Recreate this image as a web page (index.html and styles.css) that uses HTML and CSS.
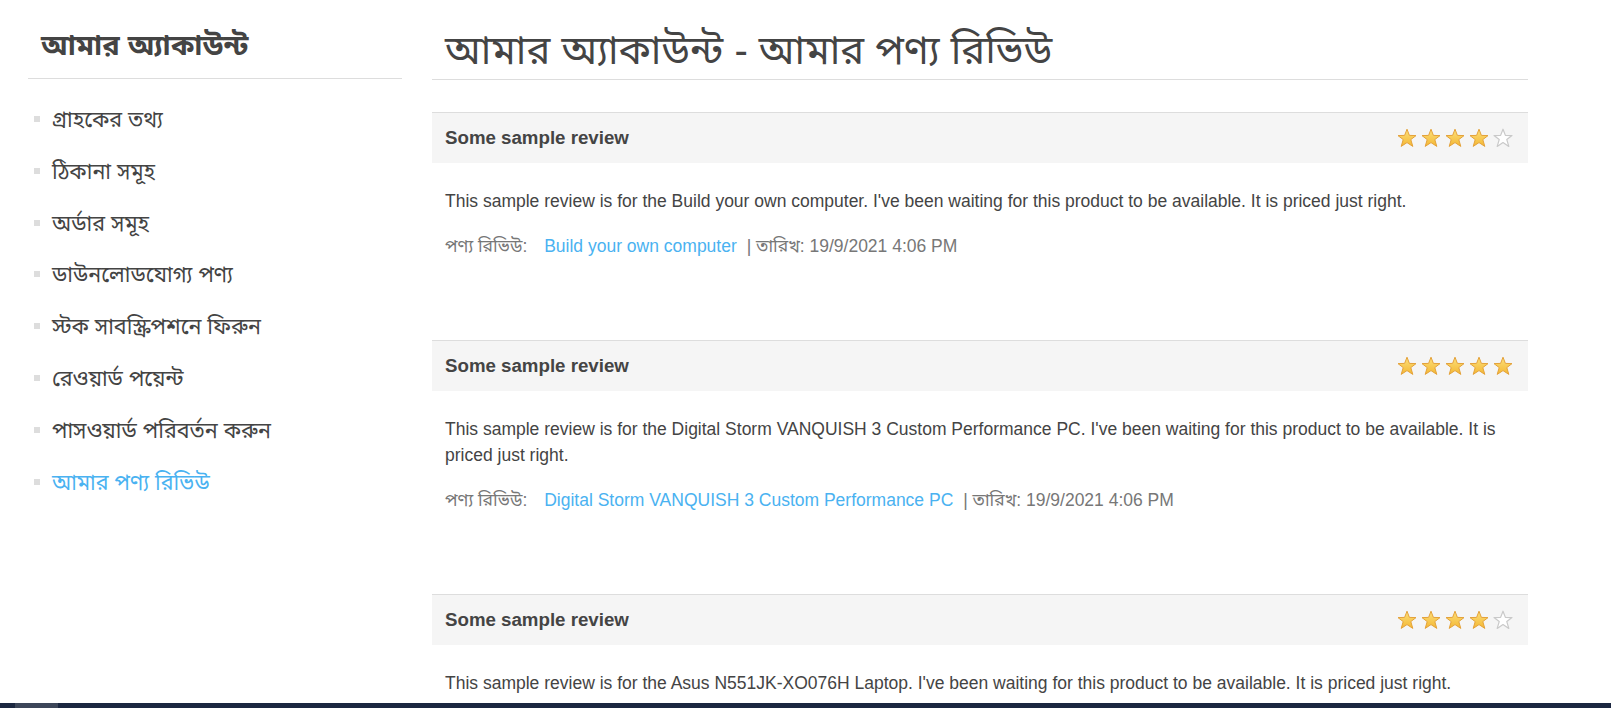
FILE: index.html
```html
<!DOCTYPE html>
<html lang="bn">
<head>
<meta charset="utf-8">
<title>আমার অ্যাকাউন্ট - আমার পণ্য রিভিউ</title>
<link rel="stylesheet" href="styles.css">
</head>
<body>
<svg class="defs" width="0" height="0" aria-hidden="true">
  <defs>
    <linearGradient id="gold" x1="0" y1="0" x2="0" y2="1">
      <stop offset="0" stop-color="#fde07a"/>
      <stop offset="1" stop-color="#f3b733"/>
    </linearGradient>
    <symbol id="star" viewBox="0 0 100 100">
      <polygon points="50,6 62,37 95,38 69,58 79,92 50,73 21,92 31,58 5,38 38,37"/>
    </symbol>
  </defs>
</svg>
<div class="page">
  <aside class="side">
    <div class="side-title">আমার অ্যাকাউন্ট</div>
    <ul class="side-list">
      <li><a href="#">গ্রাহকের তথ্য</a></li>
      <li><a href="#">ঠিকানা সমূহ</a></li>
      <li><a href="#">অর্ডার সমূহ</a></li>
      <li><a href="#">ডাউনলোডযোগ্য পণ্য</a></li>
      <li><a href="#">স্টক সাবস্ক্রিপশনে ফিরুন</a></li>
      <li><a href="#">রেওয়ার্ড পয়েন্ট</a></li>
      <li><a href="#">পাসওয়ার্ড পরিবর্তন করুন</a></li>
      <li class="active"><a href="#">আমার পণ্য রিভিউ</a></li>
    </ul>
  </aside>
  <main class="main">
    <h1 class="page-title">আমার অ্যাকাউন্ট - আমার পণ্য রিভিউ</h1>

    <div class="review">
      <div class="review-head">
        <strong class="review-title">Some sample review</strong>
        <div class="stars">
          <svg class="star on"><use href="#star"/></svg><svg class="star on"><use href="#star"/></svg><svg class="star on"><use href="#star"/></svg><svg class="star on"><use href="#star"/></svg><svg class="star off"><use href="#star"/></svg>
        </div>
      </div>
      <p class="review-text">This sample review is for the Build your own computer. I've been waiting for this product to be available. It is priced just right.</p>
      <div class="review-info"><span class="lbl">পণ্য রিভিউ:</span> <a href="#">Build your own computer</a> <span class="sep">|</span> <span class="lbl">তারিখ:</span> 19/9/2021 4:06 PM</div>
    </div>

    <div class="review">
      <div class="review-head">
        <strong class="review-title">Some sample review</strong>
        <div class="stars">
          <svg class="star on"><use href="#star"/></svg><svg class="star on"><use href="#star"/></svg><svg class="star on"><use href="#star"/></svg><svg class="star on"><use href="#star"/></svg><svg class="star on"><use href="#star"/></svg>
        </div>
      </div>
      <p class="review-text">This sample review is for the Digital Storm VANQUISH 3 Custom Performance PC. I've been waiting for this product to be available. It is priced just right.</p>
      <div class="review-info"><span class="lbl">পণ্য রিভিউ:</span> <a href="#">Digital Storm VANQUISH 3 Custom Performance PC</a> <span class="sep">|</span> <span class="lbl">তারিখ:</span> 19/9/2021 4:06 PM</div>
    </div>

    <div class="review">
      <div class="review-head">
        <strong class="review-title">Some sample review</strong>
        <div class="stars">
          <svg class="star on"><use href="#star"/></svg><svg class="star on"><use href="#star"/></svg><svg class="star on"><use href="#star"/></svg><svg class="star on"><use href="#star"/></svg><svg class="star off"><use href="#star"/></svg>
        </div>
      </div>
      <p class="review-text">This sample review is for the Asus N551JK-XO076H Laptop. I've been waiting for this product to be available. It is priced just right.</p>
      <div class="review-info"><span class="lbl">পণ্য রিভিউ:</span> <a href="#">Asus N551JK-XO076H Laptop</a> <span class="sep">|</span> <span class="lbl">তারিখ:</span> 19/9/2021 4:06 PM</div>
    </div>
  </main>
</div>
<div class="bottom-bar"><span class="bar-thumb"></span></div>
</body>
</html>
```

FILE: styles.css
```css
* { box-sizing: border-box; }
html, body { margin: 0; padding: 0; background: #fff; }
body {
  font-family: "Liberation Sans", "Noto Sans Bengali", "Lohit Bengali", "FreeSans", sans-serif;
  color: #444;
  font-size: 17.5px;
}
.defs { position: absolute; width: 0; height: 0; overflow: hidden; }
a { text-decoration: none; }

.page {
  display: flex;
  align-items: flex-start;
  padding-left: 28px;
}

.side { width: 374px; flex: none; }
.side-title {
  margin-top: 30px;
  padding: 0 13px 17px;
  font-size: 29px;
  line-height: 31px;
  font-weight: bold;
  color: #444;
  border-bottom: 1px solid #ddd;
}
.side-list {
  list-style: none;
  margin: 16px 0 0;
  padding: 0 0 0 24px;
}
.side-list li {
  padding: 12px 0;
  font-size: 21.5px;
  line-height: 27.6px;
  height: 51.8px;
}
.side-list a {
  position: relative;
  display: block;
  color: #444;
}
.side-list a::before {
  content: "";
  position: absolute;
  left: -18px;
  top: 9px;
  width: 6px;
  height: 6px;
  background: #ddd;
}
.side-list li.active a { color: #4ab2f1; }

.main {
  width: 1096px;
  margin-left: 30px;
  flex: none;
}
.page-title {
  margin: 28px 0 0;
  padding: 0 13px 7px;
  font-size: 40px;
  line-height: 44px;
  font-weight: normal;
  color: #444;
  border-bottom: 1px solid #ddd;
}
.page-title + .review { margin-top: 32px; }

.review { margin-bottom: 83px; }
.review-head {
  display: flex;
  align-items: center;
  justify-content: space-between;
  height: 51px;
  padding: 0 15px 0 13px;
  background: #f5f5f5;
  border-top: 1px solid #ddd;
}
.review-title {
  font-size: 18.7px;
  line-height: 24px;
  color: #444;
}
.stars { display: flex; gap: 4px; }
.star { width: 20px; height: 20px; }
.star.on { fill: url(#gold); stroke: #e4a23a; stroke-width: 5; stroke-linejoin: round; }
.star.off { fill: #fff; stroke: #c9c9c9; stroke-width: 6; stroke-linejoin: round; }

.review-text {
  margin: 25px 0 0;
  padding: 0 12px 0 13px;
  font-size: 17.5px;
  line-height: 26px;
  color: #444;
}
.review-info {
  margin-top: 21px;
  padding: 0 13px;
  font-size: 17.5px;
  line-height: 22px;
  color: #777;
}
.review-info a { color: #4ab2f1; margin: 0 5px 0 12px; }

.bottom-bar {
  position: fixed;
  left: 0;
  right: 0;
  bottom: 0;
  height: 5px;
  background: #1b2740;
}
.bar-thumb {
  position: absolute;
  left: 15px;
  top: 0;
  width: 43px;
  height: 5px;
  background: #3c4659;
}
```
